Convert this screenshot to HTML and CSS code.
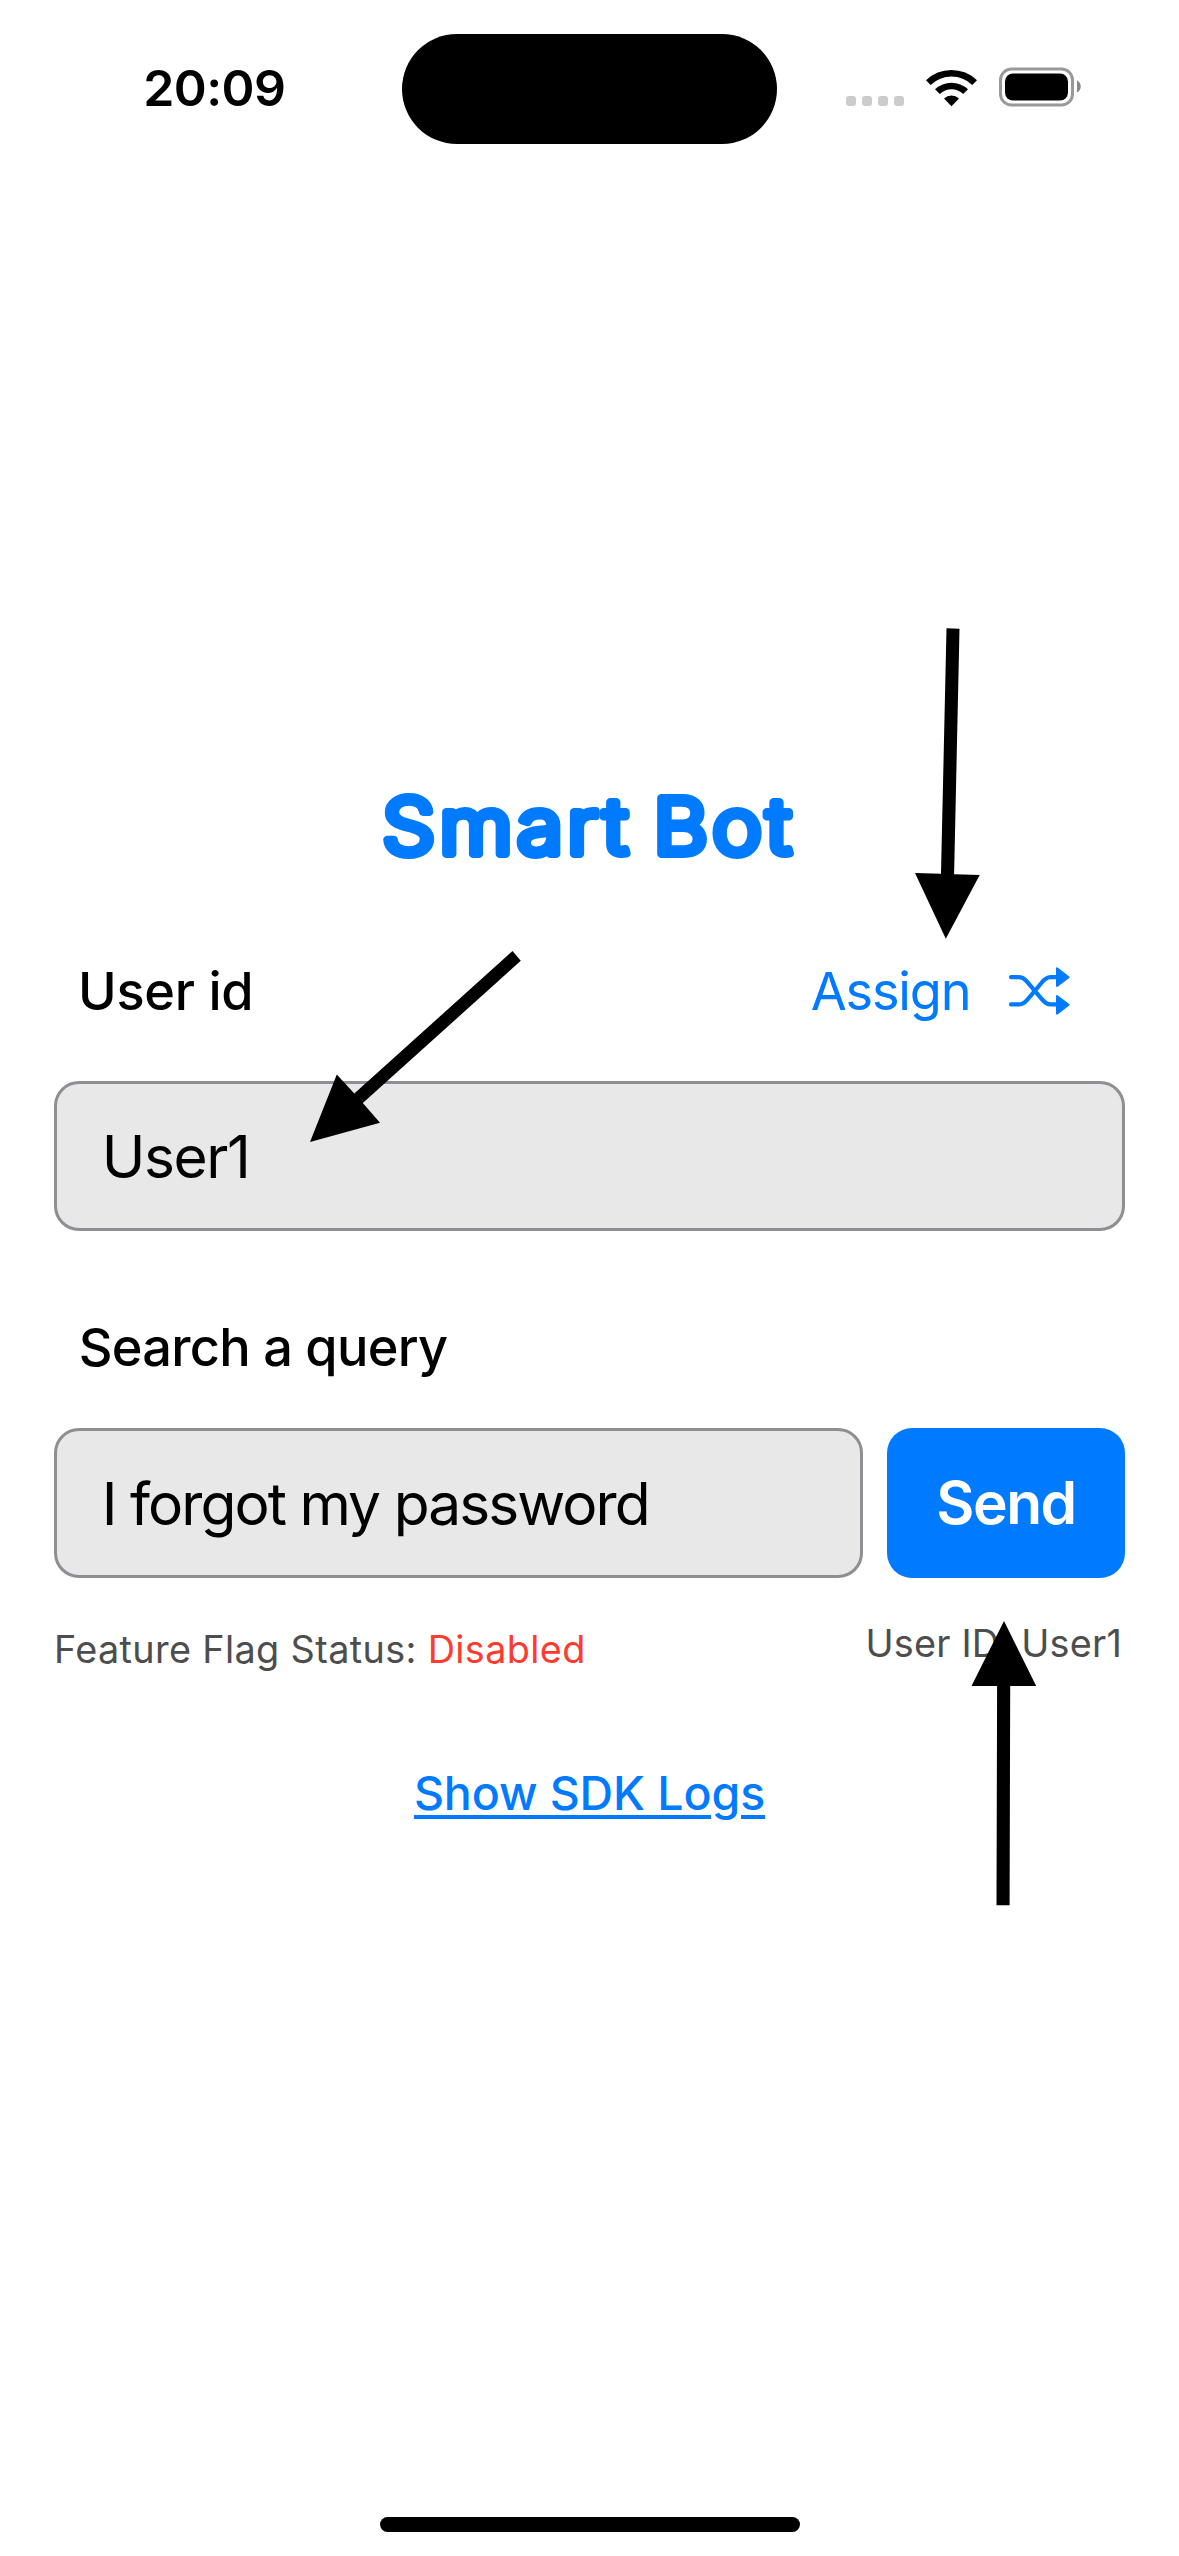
FILE: index.html
```html
<!DOCTYPE html>
<html lang="en">
<head>
<meta charset="utf-8">
<title>Smart Bot</title>
<link rel="stylesheet" href="styles.css">
</head>
<body>
<div class="screen">
  <header class="status">
    <span class="time">20:09</span>
    <div class="island"></div>
    <div class="indicators">
      <div class="dots"><i></i><i></i><i></i><i></i></div>
      <svg class="wifi" width="52" height="38" viewBox="926 69 52 38">
        <path d="M926 80.3a36.5 36.5 0 0 1 51 0l-4.7 4.6a30 30 0 0 0-41.6 0z"/>
        <path d="M935 89.3a24 24 0 0 1 33 0l-4.8 4.7a17 17 0 0 0-23.4 0z"/>
        <path d="M944 98.4a11.5 11.5 0 0 1 15 0l-7.5 7.8z"/>
      </svg>
      <svg class="battery" width="83" height="40" viewBox="999 67.5 83 40">
        <rect x="1000.5" y="69.5" width="72" height="36" rx="11" fill="none" stroke="#999" stroke-width="3"/>
        <rect x="1005" y="74" width="63" height="27" rx="8"/>
        <path d="M1077 81c5 2 5 10 0 12z" fill="#888"/>
      </svg>
    </div>
  </header>

  <main class="content">
    <svg class="title" width="530" height="120" viewBox="324 760 530 120" role="heading" aria-level="1">
      <text transform="translate(381.3 854.2) scale(1.087 1)">Smart Bot</text>
    </svg>

    <div class="label-row">
      <label class="label">User id</label>
      <button class="assign">
        <span>Assign</span>
        <svg width="64" height="50" viewBox="1007 966 64 50">
          <g fill="none" stroke="currentColor" stroke-width="4.2" stroke-linecap="round" stroke-linejoin="round">
            <path d="M1011 977.2h7.5c4 0 6.3 1.8 8.7 4.6l14.2 16.8c2.9 3.7 5.2 5.8 9.2 5.8h8"/>
            <path d="M1011 1004.4h7.5c4 0 6.3-1.8 8.7-4.6l14.2-16.8c2.9-3.7 5.2-5.8 9.2-5.8h8"/>
          </g>
          <g fill="currentColor" stroke="currentColor" stroke-width="2" stroke-linejoin="round">
            <path d="M1057 968.3l11.6 8.9-11.6 8.7z"/>
            <path d="M1057 996l11.6 8.7-11.6 8.9z"/>
          </g>
        </svg>
      </button>
    </div>
    <div class="field user-field">User1</div>

    <label class="label query-label">Search a query</label>
    <div class="query-row">
      <div class="field query-field">I forgot my password</div>
      <button class="send">Send</button>
    </div>

    <div class="meta">
      <span class="flag">Feature Flag Status: <span class="off">Disabled</span></span>
      <span class="uid">User ID: User1</span>
    </div>

    <a class="logs">Show SDK Logs</a>
  </main>

  <div class="home"></div>

  <svg class="arrows" width="1179" height="2556" viewBox="0 0 1179 2556">
    <path d="M946.5 628.3l13 .4-5.4 245.6 25.6.7-33.9 63.7-30.8-65.6 26 .6z"/>
    <path d="M512.5 951l8.3 9.8L362.8 1103l17.2 19.8L310 1142l26.8-67.6 17.5 19.2z"/>
    <path d="M1004 1621l32.2 65h-26l-.6 219.2h-13.1l.6-219.2h-25.6z"/>
  </svg>
</div>
</body>
</html>
```
FILE: styles.css
```css
* { box-sizing: border-box; }

body {
  margin: 0;
  background: #fff;
  color: #000;
  font-family: Inter, "Liberation Sans", sans-serif;
}

button {
  padding: 0;
  border: 0;
  background: none;
  font: inherit;
}

.screen {
  position: relative;
  display: flex;
  flex-direction: column;
  width: 1179px;
  height: 2556px;
  overflow: hidden;
}

.status {
  display: grid;
  grid-template-columns: 402px 375px 1fr;
  height: 760px;
  align-items: start;
}

.time {
  padding: 58px 0 0 143.3px;
  font-size: 50px;
  font-weight: 600;
  line-height: 60px;
  letter-spacing: -0.59px;
}

.island {
  height: 110.5px;
  margin-top: 33.7px;
  border-radius: 56px;
  background: #000;
}

.indicators {
  display: flex;
  padding: 67px 0 0 69px;
}

.dots {
  display: flex;
  gap: 6px;
  margin: 29px 22px 0 0;
}

.dots i {
  width: 10px;
  height: 10px;
  border-radius: 3px;
  background: #ccc;
}

.wifi { margin: 2px 21px 0 0; }

.content {
  display: flex;
  flex-direction: column;
  flex: 1;
  padding: 0 54px;
}

.title {
  align-self: center;
  flex: none;
}

.title text {
  fill: #007aff;
  stroke: #007aff;
  stroke-width: 8px;
  stroke-linejoin: round;
  font-size: 77px;
  font-weight: 300;
  letter-spacing: 4px;
  word-spacing: -6px;
}

.label-row {
  display: flex;
  justify-content: space-between;
  height: 60px;
  margin: 81px 54px 60px 24px;
}

.label {
  font-size: 52.3px;
  font-weight: 500;
  line-height: 60px;
  letter-spacing: -0.27px;
}

.assign {
  display: flex;
  align-items: center;
  gap: 36.6px;
  color: #007aff;
  font-size: 52.3px;
  line-height: 60px;
  letter-spacing: -1.2px;
}

.field {
  height: 150px;
  padding-left: 44.7px;
  border: 3px solid #8e8e93;
  border-radius: 25px;
  background: #e8e8e8;
  font-size: 58.7px;
  line-height: 145px;
  letter-spacing: -1.41px;
}

.query-label {
  margin: 86px 0 51px 24.7px;
  letter-spacing: -0.72px;
}

.query-row {
  display: flex;
  gap: 24px;
}

.query-field {
  flex: 1;
  letter-spacing: -1.96px;
}

.send {
  width: 238px;
  border-radius: 25px;
  background: #007aff;
  color: #fff;
  font-size: 58.7px;
  font-weight: 600;
  line-height: 150px;
  letter-spacing: -1.49px;
}

.meta {
  display: flex;
  justify-content: space-between;
  align-items: flex-start;
  height: 84px;
  padding-top: 41px;
  color: #4d4d4d;
  font-size: 37.8px;
  line-height: 48px;
  letter-spacing: 0.36px;
}

.flag { padding-top: 6px; }
.off { color: #ff3b30; }

.uid {
  padding-right: 3px;
  letter-spacing: 0.21px;
}

.logs {
  align-self: center;
  margin-top: 101px;
  color: #007aff;
  font-size: 46.5px;
  font-weight: 500;
  line-height: 60px;
  letter-spacing: -0.1px;
  text-decoration: underline;
  text-decoration-thickness: 4px;
  text-underline-offset: 5px;
}

.home {
  align-self: center;
  width: 420px;
  height: 15px;
  margin-bottom: 24px;
  border-radius: 8px;
  background: #000;
}

/* Callout arrows drawn over the screen */
.arrows {
  position: absolute;
  inset: 0;
  pointer-events: none;
}
```
